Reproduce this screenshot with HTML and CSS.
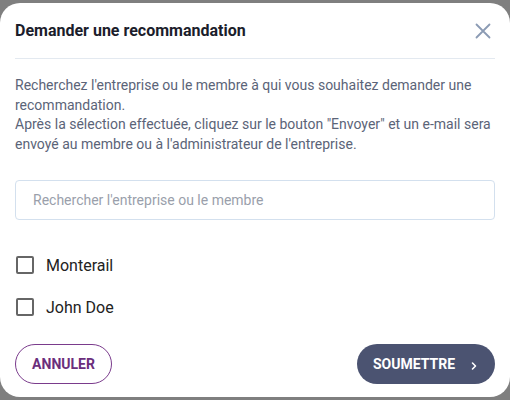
FILE: index.html
```html
<!DOCTYPE html>
<html lang="fr">
<head>
<meta charset="utf-8">
<link rel="stylesheet" href="styles.css">
</head>
<body>
<div class="backdrop">
  <div class="modal">
    <header class="modal-header">
      <h2 class="modal-title">Demander une recommandation</h2>
      <button class="close-btn" aria-label="Fermer">
        <svg width="16" height="16" viewBox="0 0 16 16"><path d="M1.5 1.5 L14.5 14.5 M14.5 1.5 L1.5 14.5" stroke="#8b9bb4" stroke-width="1.8" fill="none" stroke-linecap="round"/></svg>
      </button>
    </header>
    <div class="modal-body">
      <p class="intro">Recherchez l'entreprise ou le membre à qui vous souhaitez demander une recommandation.<br>Après la sélection effectuée, cliquez sur le bouton "Envoyer" et un e-mail sera envoyé au membre ou à l'administrateur de l'entreprise.</p>
      <input class="search" type="text" placeholder="Rechercher l'entreprise ou le membre">
      <ul class="options">
        <li class="option"><span class="checkbox"></span><span class="option-label">Monterail</span></li>
        <li class="option"><span class="checkbox"></span><span class="option-label">John Doe</span></li>
      </ul>
    </div>
    <footer class="modal-footer">
      <button class="btn btn-outline">ANNULER</button>
      <button class="btn btn-primary">SOUMETTRE
        <svg class="chev" width="8" height="10" viewBox="0 0 8 10"><path d="M2.5 2 L5.5 5 L2.5 8" stroke="#fff" stroke-width="1.6" fill="none" stroke-linecap="round" stroke-linejoin="round"/></svg>
      </button>
    </footer>
  </div>
</div>
</body>
</html>
```
FILE: styles.css
```css
* { box-sizing: border-box; }
html, body { margin: 0; padding: 0; }
body {
  background: #7f7f7f;
  font-family: Roboto, "Liberation Sans", sans-serif;
  width: 510px;
  height: 400px;
  overflow: hidden;
}
.backdrop {
  padding: 3px 0 3px 0;
}
.modal {
  background: #fff;
  width: 510px;
  height: 394px;
  border-radius: 20px;
  display: flex;
  flex-direction: column;
}
.modal-header {
  display: flex;
  align-items: center;
  justify-content: space-between;
  margin: 0 15px;
  height: 56px;
  border-bottom: 1px solid #e3e9f0;
}
.modal-title {
  margin: 0;
  font-size: 16px;
  font-weight: 700;
  color: #1b1d2b;
}
.close-btn {
  border: 0;
  background: none;
  padding: 0;
  margin-right: 4px;
  width: 16px;
  height: 16px;
  display: flex;
}
.modal-body {
  padding: 0 15px;
}
.intro {
  margin: 17px 0 0;
  font-size: 14px;
  line-height: 19.5px;
  color: #5b6478;
}
.search {
  display: block;
  width: 100%;
  height: 40px;
  margin-top: 26px;
  border: 1px solid #d3e0ee;
  border-radius: 4px;
  padding: 0 17px;
  font-family: inherit;
  font-size: 14px;
  color: #333;
  outline: none;
}
.search::placeholder { color: #9a9fab; }
.options {
  list-style: none;
  margin: 24px 0 0;
  padding: 0;
}
.option {
  display: flex;
  align-items: center;
  height: 42px;
}
.checkbox {
  width: 18px;
  height: 18px;
  border: 2px solid #666;
  border-radius: 2px;
  margin-left: 1px;
  margin-right: 12px;
}
.option-label {
  font-size: 16px;
  color: #222;
}
.modal-footer {
  display: flex;
  justify-content: space-between;
  align-items: center;
  margin-top: auto;
  padding: 0 15px 13px;
}
.btn {
  height: 40px;
  border-radius: 20px;
  font-family: inherit;
  font-size: 14px;
  font-weight: 700;
  display: flex;
  align-items: center;
  cursor: pointer;
}
.btn-outline {
  width: 97px;
  justify-content: center;
  background: #fff;
  border: 1px solid #7a3b8c;
  color: #6b2e7c;
  padding: 0;
}
.btn-primary {
  width: 138px;
  background: #4b5371;
  border: 0;
  color: #fff;
  padding: 0 0 0 16px;
}
.chev {
  margin-left: 15px;
  margin-top: 3px;
}
```
